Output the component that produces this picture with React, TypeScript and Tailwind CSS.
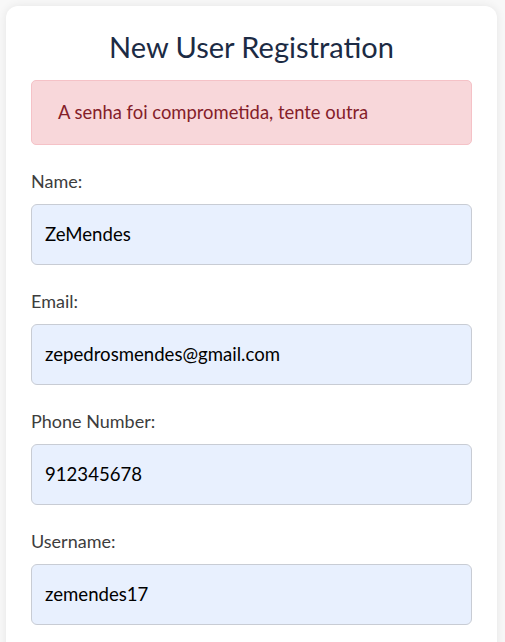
import React from "react";

const fields = [
  { label: "Name:", value: "ZeMendes" },
  { label: "Email:", value: "zepedrosmendes@gmail.com" },
  { label: "Phone Number:", value: "912345678" },
  { label: "Username:", value: "zemendes17" },
];

export default function App() {
  return (
    <div
      className="bg-[#f8f8f8] pt-[6px] pl-[6px] pr-[8px] overflow-hidden h-[642px]"
      style={{ fontFamily: "Lato, 'Open Sans', sans-serif" }}
    >
      <div className="bg-white rounded-[12px] shadow-[0_0_10px_rgba(0,0,0,0.08)] px-[25px] pt-[24px] pb-[40px]">
        <h1 className="text-center text-[29px] leading-[34px] text-[#1c2b44] font-normal">
          New User Registration
        </h1>
        <div className="mt-[16px] h-[65px] flex items-center px-[26px] bg-[#f8d7da] border border-[#f5c2c7] rounded-[5px] text-[#842029] text-[18.4px]">
          A senha foi comprometida, tente outra
        </div>
        {fields.map((f) => (
          <div key={f.label} className="mt-[24px] flex flex-col">
            <label className="text-[18px] leading-[24px] text-[#3d3d3d]">{f.label}</label>
            <div className="mt-[11px] h-[61px] flex items-center px-[13px] bg-[#e8f0fe] border border-[#c8ccd4] rounded-[6px] text-[18.6px] text-black">
              {f.value}
            </div>
          </div>
        ))}
      </div>
    </div>
  );
}
